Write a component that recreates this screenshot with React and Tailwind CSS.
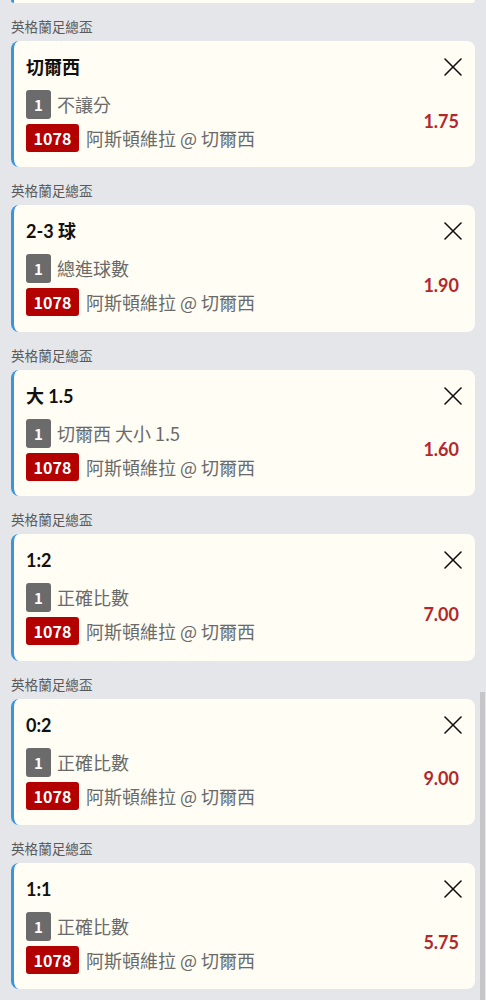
import React from "react";

const items = [
  { title: "切爾西", bet: "不讓分", odds: "1.75" },
  { title: "2-3 球", bet: "總進球數", odds: "1.90" },
  { title: "大 1.5", bet: "切爾西 大小 1.5", odds: "1.60" },
  { title: "1:2", bet: "正確比數", odds: "7.00" },
  { title: "0:2", bet: "正確比數", odds: "9.00" },
  { title: "1:1", bet: "正確比數", odds: "5.75" },
];

const cjk = { fontFamily: '"Noto Sans CJK TC", sans-serif' };

function CloseIcon() {
  return (
    <svg width="24" height="24" viewBox="0 0 24 24" fill="none" stroke="#111" strokeWidth="1.6" strokeLinecap="round">
      <path d="M4 4 L20 20" />
      <path d="M20 4 L4 20" />
    </svg>
  );
}

function Card({ title, bet, odds }) {
  return (
    <div className="h-[126.4px] rounded-lg bg-[#fffdf4] border-l-[3px] border-[#3b95d9] pl-3 pr-[10px] pt-[13px] flex flex-col">
      <div className="flex items-center justify-between h-[26px]">
        <div className="text-[18px] font-bold text-[#111] leading-[26px]">{title}</div>
        <CloseIcon />
      </div>
      <div className="flex items-center justify-between mt-[10px]">
        <div className="flex flex-col gap-[5px]" style={cjk}>
          <div className="flex items-center gap-[6px] h-[29px]">
            <span className="w-[25px] h-[29px] rounded-[3px] bg-[#6b6b6b] text-white text-[15px] font-bold flex items-center justify-center leading-none">1</span>
            <span className="text-[18px] text-[#6a6a6a] leading-[29px]">{bet}</span>
          </div>
          <div className="flex items-center gap-[7px] h-[28px]">
            <span className="w-[53px] h-[28px] rounded-[3px] bg-[#b30000] text-white text-[16px] font-bold flex items-center justify-center leading-none">1078</span>
            <span className="text-[18px] text-[#6a6a6a] leading-[28px]">阿斯頓維拉 @ 切爾西</span>
          </div>
        </div>
        <div className="text-[18px] font-bold text-[#b3282a] mr-[6px]">{odds}</div>
      </div>
    </div>
  );
}

export default function App() {
  return (
    <div
      className="relative w-[486px] min-h-[1000px] bg-[#e5e6e9] px-[11px] overflow-hidden"
      style={{ fontFamily: 'Lato, "Noto Sans CJK TC", sans-serif' }}
    >
      <div className="h-[3px] rounded-b-lg bg-[#fffdf4] border-l-[3px] border-[#3b95d9]" />
      {items.map((it, i) => (
        <div key={i}>
          <div className="h-[38px] pt-[15px] text-[13.6px] leading-[16px] text-[#5a5a5a]" style={cjk}>英格蘭足總盃</div>
          <Card {...it} />
        </div>
      ))}
      <div className="absolute right-[1px] top-[692px] bottom-0 w-[5px] bg-[#c6c6c8]" />
    </div>
  );
}
